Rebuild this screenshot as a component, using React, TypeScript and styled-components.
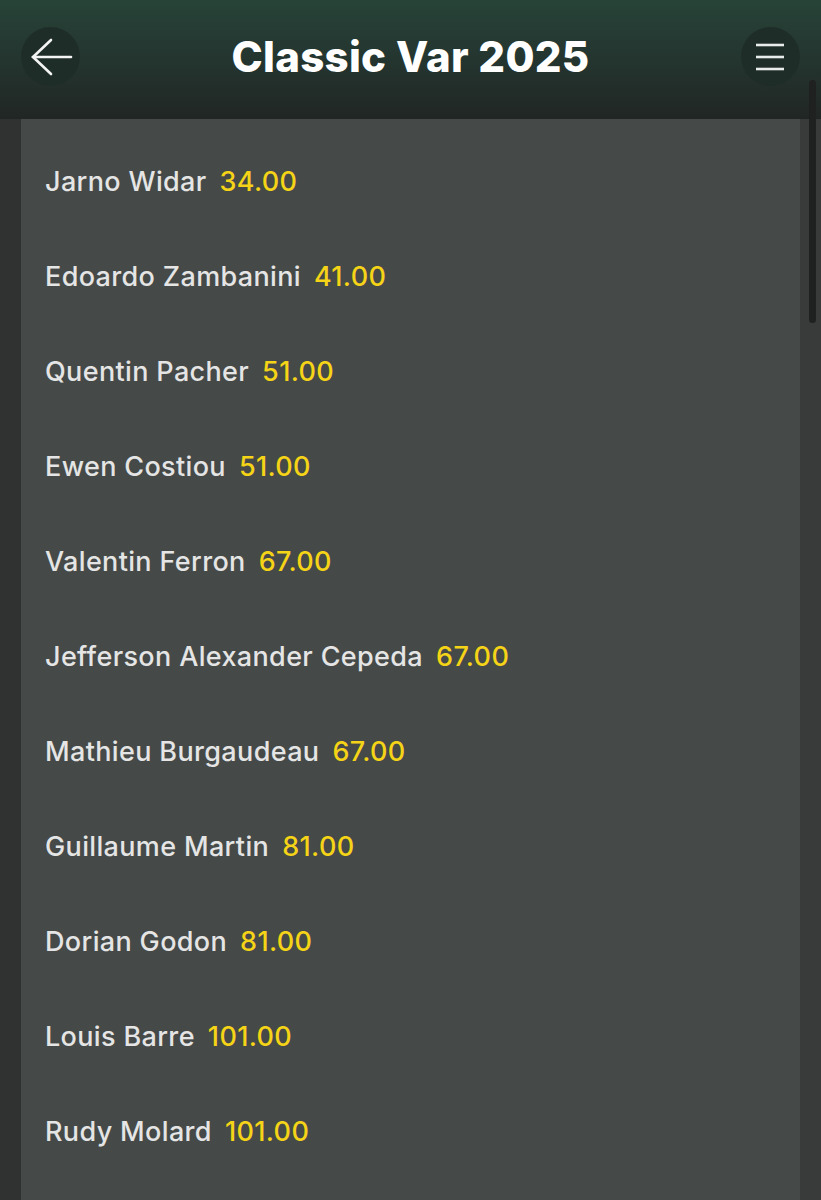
import styled, { createGlobalStyle } from 'styled-components';

interface Runner {
    name: string
    odds: string
}

const runners: Runner[] = [
    { name: 'Jarno Widar', odds: '34.00' },
    { name: 'Edoardo Zambanini', odds: '41.00' },
    { name: 'Quentin Pacher', odds: '51.00' },
    { name: 'Ewen Costiou', odds: '51.00' },
    { name: 'Valentin Ferron', odds: '67.00' },
    { name: 'Jefferson Alexander Cepeda', odds: '67.00' },
    { name: 'Mathieu Burgaudeau', odds: '67.00' },
    { name: 'Guillaume Martin', odds: '81.00' },
    { name: 'Dorian Godon', odds: '81.00' },
    { name: 'Louis Barre', odds: '101.00' },
    { name: 'Rudy Molard', odds: '101.00' },
]

const GlobalStyle = createGlobalStyle`
    html, body {
        margin: 0;
        padding: 0;
        background: #303231;
        overflow: hidden;
    }
    * {
        box-sizing: border-box;
    }
`

const Screen = styled.div`
    width: 821px;
    height: 1200px;
    display: flex;
    flex-direction: column;
    position: relative;
    overflow: hidden;
    font-family: Inter, "Open Sans", "Liberation Sans", sans-serif;
    background: #303231;
`

const Header = styled.header`
    height: 119px;
    flex-shrink: 0;
    display: flex;
    align-items: flex-start;
    justify-content: space-between;
    padding: 27px 21px 0 21px;
    background: linear-gradient(180deg, #274338 0%, #24352f 50%, #212624 100%);
`

const RoundButton = styled.div`
    width: 59px;
    height: 59px;
    border-radius: 50%;
    background: #1f2d28;
    display: flex;
    align-items: center;
    justify-content: center;
`

const Title = styled.h1`
    margin: 0;
    margin-top: 4px;
    font-size: 42px;
    font-weight: 800;
    color: #ffffff;
    letter-spacing: 0.3px;
`

const Body = styled.div`
    flex: 1;
    display: flex;
    padding: 0 21px;
    background: #303231;
`

const Panel = styled.div`
    flex: 1;
    background: #454948;
    padding-top: 15px;
    display: flex;
    flex-direction: column;
`

const RightGutter = styled.div`
    position: absolute;
    right: 0;
    top: 119px;
    bottom: 0;
    width: 21px;
    background: #393b3a;
`

const ScrollThumb = styled.div`
    position: absolute;
    right: 5px;
    top: 80px;
    width: 7px;
    height: 243px;
    border-radius: 4px;
    background: #1e2120;
`

const Row = styled.div`
    height: 95px;
    display: flex;
    align-items: center;
    padding-left: 24px;
    gap: 13px;
    font-size: 27px;
    font-weight: 500;
    letter-spacing: 0.35px;
`

const Name = styled.span`
    color: #e4e5e4;
`

const Odds = styled.span`
    color: #f5d417;
`

const BackIcon = () => (
    <svg width="46" height="40" viewBox="0 0 46 40" fill="none" stroke="#f4f4f4" strokeWidth="2.6" strokeLinecap="round">
        <path d="M23 3 L5 20 L23 37" />
        <path d="M5 20 H43" />
    </svg>
)

const MenuIcon = () => (
    <svg width="30" height="30" viewBox="0 0 30 30" fill="none" stroke="#e8ecea" strokeWidth="2.6">
        <path d="M1 3 H29" />
        <path d="M1 15 H29" />
        <path d="M1 27 H29" />
    </svg>
)

const App = () => {
    return (
        <Screen>
            <GlobalStyle />
            <Header>
                <RoundButton>
                    <BackIcon />
                </RoundButton>
                <Title>Classic Var 2025</Title>
                <RoundButton>
                    <MenuIcon />
                </RoundButton>
            </Header>
            <Body>
                <Panel>
                    {runners.map((r) => (
                        <Row key={r.name}>
                            <Name>{r.name}</Name>
                            <Odds>{r.odds}</Odds>
                        </Row>
                    ))}
                </Panel>
            </Body>
            <RightGutter />
            <ScrollThumb />
        </Screen>
    )
}

export default App
